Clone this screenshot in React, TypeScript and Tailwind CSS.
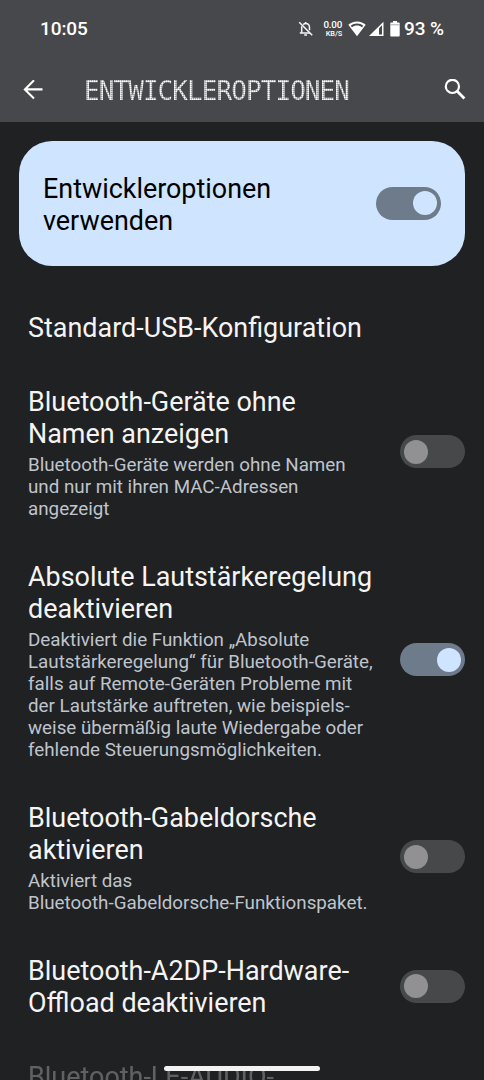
import clsx from "clsx";

interface Option {
  title: string[];
  summary?: string[];
  enabled?: boolean;
  disabled?: boolean;
}

const OPTIONS: Option[] = [
  { title: ["Standard-USB-Konfiguration"] },
  {
    title: ["Bluetooth-Geräte ohne", "Namen anzeigen"],
    summary: [
      "Bluetooth-Geräte werden ohne Namen",
      "und nur mit ihren MAC-Adressen",
      "angezeigt",
    ],
    enabled: false,
  },
  {
    title: ["Absolute Lautstärkeregelung", "deaktivieren"],
    summary: [
      "Deaktiviert die Funktion „Absolute",
      "Lautstärkeregelung“ für Bluetooth-Geräte,",
      "falls auf Remote-Geräten Probleme mit",
      "der Lautstärke auftreten, wie beispiels-",
      "weise übermäßig laute Wiedergabe oder",
      "fehlende Steuerungsmöglichkeiten.",
    ],
    enabled: true,
  },
  {
    title: ["Bluetooth-Gabeldorsche", "aktivieren"],
    summary: ["Aktiviert das", "Bluetooth-Gabeldorsche-Funktionspaket."],
    enabled: false,
  },
  {
    title: ["Bluetooth-A2DP-Hardware-", "Offload deaktivieren"],
    enabled: false,
  },
  { title: ["Bluetooth-LE-AUDIO-"], disabled: true },
];

function Toggle({ on }: { on: boolean }) {
  return (
    <div
      role="switch"
      aria-checked={on}
      className={clsx(
        "flex h-[33px] w-[65px] shrink-0 items-center rounded-full px-1",
        on ? "justify-end bg-[#6d7b8b]" : "justify-start bg-[#47484a]"
      )}
    >
      <div
        className={clsx(
          "size-[24px] rounded-full",
          on ? "bg-[#cfe4ff]" : "bg-[#919194]"
        )}
      />
    </div>
  );
}

function StatusBar() {
  return (
    <div className="flex h-[58px] items-center pr-[40px] pl-[40px] text-[19px] font-medium tracking-[-0.1px]">
      <span className="grow">10:05</span>

      {/* Muted bell */}
      <svg className="mr-[9px] h-[16px] w-[16px]" viewBox="0 0 16 16" fill="none" stroke="#f4f4f4" strokeWidth="1.5">
        <path d="M5.2 3.6C6 2.9 7 2.6 7.6 2.6c2.4 0 3.9 1.8 3.9 4v2.6M3.7 5.3v6.4M1.8 12h10.3" />
        <path d="M1.2 1.2l13 13" />
        <path d="M7.6 1v1.5M6.2 14h2.8" />
      </svg>

      <div className="mr-[6px] flex w-[19px] flex-col items-end pb-[1px]">
        <span className="text-[9.8px] leading-[11px] tracking-[-0.2px]">0.00</span>
        <span className="text-[7.4px] leading-[8px]">KB/S</span>
      </div>

      {/* Wi-Fi */}
      <svg className="mr-[3px] h-[16px] w-[18px]" viewBox="0 0 18 16">
        <path d="M9 .4C5.5.4 2.5 1.7.3 3.7L9 15.3 17.7 3.7C15.5 1.7 12.5.4 9 .4Z" fill="#fff" />
        <path d="M2.7 4.7C4.5 3.3 6.6 2.5 9 2.5s4.5.8 6.3 2.2L14 6.2C12.6 5 10.9 4.4 9 4.4S5.4 5 4 6.2Z" fill="#47484b" />
      </svg>

      {/* Mobile signal */}
      <svg className="mr-[6px] h-[16px] w-[15px]" viewBox="0 0 15 16">
        <path d="M0 15 14.5.8V15Z" fill="#fff" />
        <path d="M10 7.2 13 4.2V13.5H10Z" fill="#47484b" />
      </svg>

      {/* Battery */}
      <svg className="mr-[4px] h-[16px] w-[10px]" viewBox="0 0 10 16">
        <path d="M3 0h4v1.5h1.7c.6 0 1 .4 1 1V14.5c0 .6-.4 1-1 1H1.3c-.6 0-1-.4-1-1V2.5c0-.6.4-1 1-1H3Z" fill="#fff" />
        <path d="M.3 3.8h9.4" stroke="#a0a0a2" strokeWidth=".9" />
      </svg>

      <span>93 %</span>
    </div>
  );
}

function AppBar() {
  return (
    <div className="flex h-[64px] items-center pr-[18px] pl-[23px]">
      <svg className="h-[20px] w-[20px]" viewBox="0 0 20 20" fill="none" stroke="#fff" strokeWidth="2.1">
        <path d="M19.5 9.4H2M11 .3 1.9 9.4 11 18.5" />
      </svg>
      {/* Dot-matrix title */}
      <h1 className="mt-[2px] ml-[41px] grow bg-[radial-gradient(circle_at_0.5px_0.5px,#ffffff_0.6px,#d6d6d8_1px,#a0a0a3_1.4px)] bg-[length:2px_2px] bg-clip-text font-['DejaVu_Sans_Mono',monospace] text-[26px] leading-[32px] tracking-[-0.93px] whitespace-nowrap text-transparent">
        ENTWICKLEROPTIONEN
      </h1>
      <svg className="h-[22px] w-[22px]" viewBox="0 0 22 22" fill="none" stroke="#fff" strokeWidth="2.2">
        <circle cx="8.4" cy="7.4" r="6.6" />
        <path d="M13.2 12.2 20.4 19.4" strokeWidth="2.8" />
      </svg>
    </div>
  );
}

function OptionRow({ title, summary, enabled, disabled }: Option) {
  return (
    <div className={clsx("flex items-center justify-between pt-[22px] pr-[19px] pb-[20px] pl-[28px]", disabled && "opacity-30")}>
      <div className="whitespace-nowrap">
        <h2 className="text-[26.95px] leading-[32px] text-[#f4f4f4]">
          {title.map((line) => (
            <div key={line}>{line}</div>
          ))}
        </h2>
        {summary && (
          <p className="mb-[-1px] pt-[4px] text-[18.8px] leading-[22px] text-[#bfc4cc]">
            {summary.map((line) => (
              <span key={line} className="block">{line}</span>
            ))}
          </p>
        )}
      </div>
      {enabled !== undefined && (
        <div className="mb-[2px]">
          <Toggle on={enabled} />
        </div>
      )}
    </div>
  );
}

export default function App() {
  return (
    <div className="relative h-[1080px] w-[484px] overflow-hidden bg-[#202123] font-[Roboto,sans-serif] text-white">
      <header className="h-[122px] bg-[#47484b]">
        <StatusBar />
        <AppBar />
      </header>

      <main>
        <section className="mx-[19px] mt-[19px] mb-[24.5px] flex h-[124.5px] items-center justify-between rounded-[33px] bg-[#cfe4ff] pr-[24px] pl-[24px] text-black">
          <h2 className="pt-[3px] text-[26.9px] leading-[32px]">
            Entwickleroptionen
            <br />
            verwenden
          </h2>
          <Toggle on />
        </section>

        {OPTIONS.map((option) => (
          <OptionRow key={option.title[0]} {...option} />
        ))}
      </main>

      {/* Gesture handle */}
      <div className="absolute bottom-[9px] left-[164px] h-[5px] w-[156px] rounded-full bg-[#f3f3f3]" />
    </div>
  );
}
